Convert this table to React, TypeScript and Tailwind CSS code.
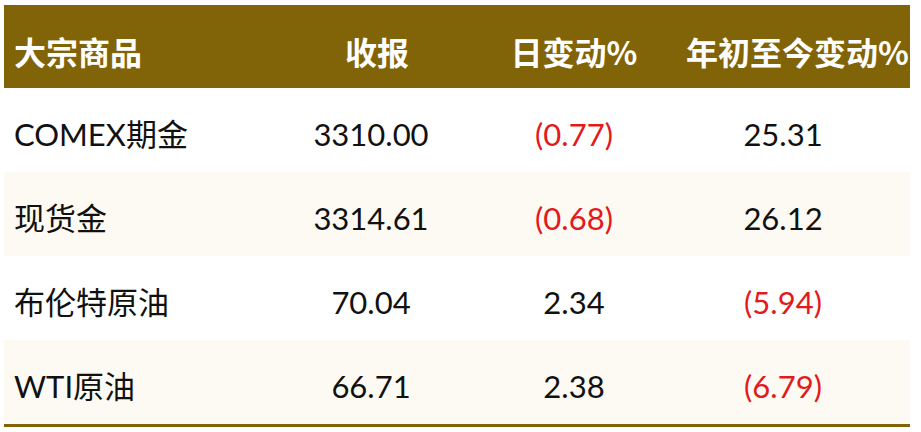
import React from 'react';

type Row = {
  name: string;
  close: string;
  day: string;
  dayNeg: boolean;
  ytd: string;
  ytdNeg: boolean;
};

const rows: Row[] = [
  { name: 'COMEX期金', close: '3310.00', day: '(0.77)', dayNeg: true, ytd: '25.31', ytdNeg: false },
  { name: '现货金', close: '3314.61', day: '(0.68)', dayNeg: true, ytd: '26.12', ytdNeg: false },
  { name: '布伦特原油', close: '70.04', day: '2.34', dayNeg: false, ytd: '(5.94)', ytdNeg: true },
  { name: 'WTI原油', close: '66.71', day: '2.38', dayNeg: false, ytd: '(6.79)', ytdNeg: true },
];

const font = { fontFamily: 'Lato, "Noto Sans CJK SC", sans-serif' };
const headFont = { fontFamily: '"Noto Sans CJK SC", sans-serif' };

export default function App() {
  return (
    <div className="w-[921px] h-[432px] bg-white pt-[5px] pl-[4px]" style={font}>
      <div className="w-[906px]">
        <div className="flex h-[83px] items-center bg-[#826408] pt-2 text-[32px] font-bold text-white whitespace-nowrap" style={headFont}>
          <div className="w-[276px] pl-[10px]">大宗商品</div>
          <div className="w-[182px] pl-3 text-center">收报</div>
          <div className="w-[224px] text-center">日变动%</div>
          <div className="w-[224px] pr-3 text-center">年初至今变动%</div>
        </div>
        {rows.map((r, i) => (
          <div
            key={r.name}
            className={`flex h-[84px] items-center pt-2 text-[31px] text-[#111] whitespace-nowrap ${i % 2 === 1 ? 'bg-[#fcfaf3]' : 'bg-white'}`}
          >
            <div className="w-[276px] pl-[10px]">{r.name}</div>
            <div className="w-[182px] text-center">{r.close}</div>
            <div className={`w-[224px] text-center ${r.dayNeg ? 'text-[#e3191c]' : ''}`}>{r.day}</div>
            <div className={`w-[194px] text-center ${r.ytdNeg ? 'text-[#e3191c]' : ''}`}>{r.ytd}</div>
          </div>
        ))}
        <div className="h-[3px] bg-[#826408]" />
      </div>
    </div>
  );
}
